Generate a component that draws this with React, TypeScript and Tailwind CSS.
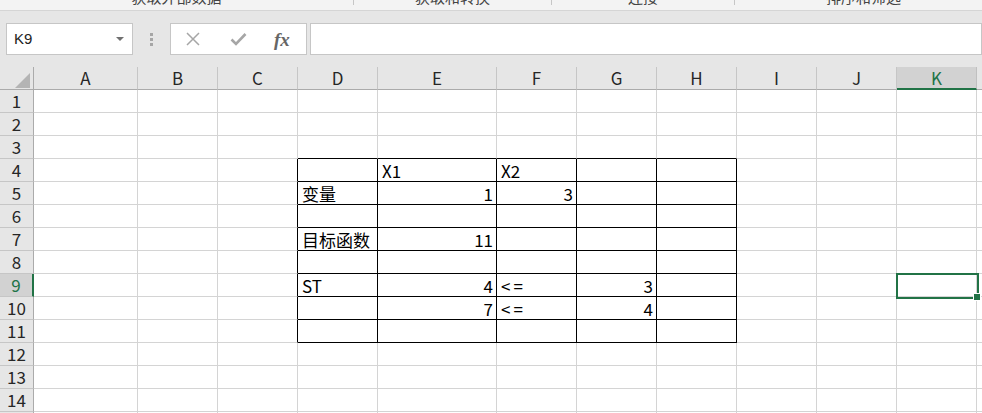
import React from "react";

const cols = ["A", "B", "C", "D", "E", "F", "G", "H", "I", "J", "K", "L"];
const colWidths = "grid-cols-[34px_104px_80px_80px_80px_119px_80px_80px_80px_80px_80px_80px_80px]";

type Cell = { v: string; right?: boolean; wide?: boolean };

// sheet content, keyed by "col+row"
const data: Record<string, Cell> = {
  E4: { v: "X1" },
  F4: { v: "X2" },
  D5: { v: "变量" },
  E5: { v: "1", right: true },
  F5: { v: "3", right: true },
  D7: { v: "目标函数" },
  E7: { v: "11", right: true },
  D9: { v: "ST" },
  E9: { v: "4", right: true },
  F9: { v: "<=", wide: true },
  G9: { v: "3", right: true },
  E10: { v: "7", right: true },
  F10: { v: "<=", wide: true },
  G10: { v: "4", right: true },
};

const ribbon = [
  { label: "获取外部数据", w: "w-[354px]" },
  { label: "获取和转换", w: "w-[198px]" },
  { label: "连接", w: "w-[183px]" },
  { label: "排序和筛选", w: "w-[258px]" },
];

const font = "font-['Noto_Sans_CJK_SC','Liberation_Sans',sans-serif]";

// black borders around D4:H11
const inBox = (c: number, r: number) => c >= 3 && c <= 7 && r >= 4 && r <= 11;

function SheetCell({ c, r }: { c: number; r: number }) {
  const key = cols[c] + r;
  const cell = data[key];
  const rightBlack = inBox(c, r) || (c === 2 && r >= 4 && r <= 11);
  const bottomBlack = inBox(c, r) || (r === 3 && c >= 3 && c <= 7);
  const selected = key === "K9";
  return (
    <div
      className={`relative h-[23px] border-r border-b flex items-end ${
        rightBlack ? "border-r-black" : "border-r-[#d4d4d4]"
      } ${bottomBlack ? "border-b-black" : "border-b-[#d4d4d4]"} ${
        cell?.right ? "justify-end pr-[3px]" : "justify-start pl-[4px]"
      }`}
    >
      {cell && (
        <span
          className={`text-[17px] leading-[21px] text-black whitespace-nowrap ${
            cell.wide ? "tracking-[3px]" : ""
          }`}
        >
          {cell.v}
        </span>
      )}
      {selected && (
        <>
          <div className="absolute -left-[1px] -top-[1px] w-[83px] h-[26px] border-2 border-[#217346] z-10" />
          <div className="absolute left-[76px] top-[19px] w-[8px] h-[8px] bg-[#217346] border border-white z-20" />
        </>
      )}
    </div>
  );
}

export default function App() {
  const rows = Array.from({ length: 15 }, (_, i) => i + 1);
  return (
    <div className={`w-[982px] h-[413px] overflow-hidden bg-white ${font}`}>
      {/* ribbon group labels, cut off at the top */}
      <div className="h-[11px] bg-[#f3f3f3] border-b border-[#d5d5d5] flex overflow-hidden">
        {ribbon.map((g) => (
          <div key={g.label} className={`${g.w} shrink-0 h-[5px] border-r border-[#c6c6c6] flex justify-center`}>
            <span className="-mt-[11px] text-[15px] leading-[15px] text-[#444]">{g.label}</span>
          </div>
        ))}
      </div>

      {/* name box + formula bar */}
      <div className="h-[56px] bg-[#e6e6e6] pt-[12px] flex items-start">
        <div className="ml-[6px] w-[127px] h-[32px] bg-white border border-[#c6c6c6] flex items-center justify-between pl-[7px] pr-[8px]">
          <span className="text-[15px] text-[#222] font-['Liberation_Sans',sans-serif]">K9</span>
          <svg width="8" height="4" viewBox="0 0 8 4">
            <path d="M0 0 L8 0 L4 4 Z" fill="#707070" />
          </svg>
        </div>
        <div className="w-[37px] h-[32px] flex flex-col items-center justify-center gap-[2px]">
          <span className="w-[3px] h-[3px] bg-[#a6a6a6]" />
          <span className="w-[3px] h-[3px] bg-[#a6a6a6]" />
          <span className="w-[3px] h-[3px] bg-[#a6a6a6]" />
        </div>
        <div className="w-[137px] h-[32px] bg-white border border-[#c6c6c6] flex items-center">
          <svg className="ml-[14px]" width="16" height="16" viewBox="0 0 16 16">
            <path d="M2 2 L14 14 M14 2 L2 14" stroke="#a6a6a6" strokeWidth="1.5" />
          </svg>
          <svg className="ml-[29px]" width="17" height="16" viewBox="0 0 17 16">
            <path d="M1.5 8.5 L6 13 L15.5 3" stroke="#a6a6a6" strokeWidth="2.6" fill="none" />
          </svg>
          <span className="ml-[27px] text-[19px] italic font-bold text-[#666] font-['Liberation_Serif',serif] leading-none">
            fx
          </span>
        </div>
        <div className="ml-[3px] flex-1 h-[32px] bg-white border border-[#c6c6c6]" />
      </div>

      {/* sheet grid */}
      <div className={`grid ${colWidths}`}>
        {/* column header row */}
        <div className="h-[23px] bg-[#e6e6e6] border-r border-b border-[#ababab] relative">
          <svg className="absolute left-[15px] top-[6px]" width="15" height="15" viewBox="0 0 15 15">
            <path d="M15 0 L15 15 L0 15 Z" fill="#b4b4b4" />
          </svg>
        </div>
        {cols.map((c) =>
          c === "K" ? (
            <div
              key={c}
              className="h-[23px] bg-[#d2d2d2] border-r border-r-[#c0c0c0] border-b-2 border-b-[#217346] flex items-center justify-center text-[17px] text-[#217346]"
            >
              {c}
            </div>
          ) : (
            <div
              key={c}
              className="h-[23px] bg-[#e6e6e6] border-r border-r-[#c6c6c6] border-b border-b-[#ababab] flex items-center justify-center text-[17px] text-[#262626]"
            >
              {c}
            </div>
          )
        )}

        {rows.map((r) => (
          <React.Fragment key={r}>
            {r === 9 ? (
              <div className="h-[23px] bg-[#d2d2d2] border-r-2 border-r-[#217346] border-b border-b-[#c6c6c6] flex items-center justify-center text-[17px] text-[#217346]">
                {r}
              </div>
            ) : (
              <div className="h-[23px] bg-[#e6e6e6] border-r border-r-[#ababab] border-b border-b-[#c6c6c6] flex items-center justify-center text-[17px] text-[#262626]">
                {r}
              </div>
            )}
            {cols.map((_, c) => (
              <SheetCell key={c} c={c} r={r} />
            ))}
          </React.Fragment>
        ))}
      </div>
    </div>
  );
}
